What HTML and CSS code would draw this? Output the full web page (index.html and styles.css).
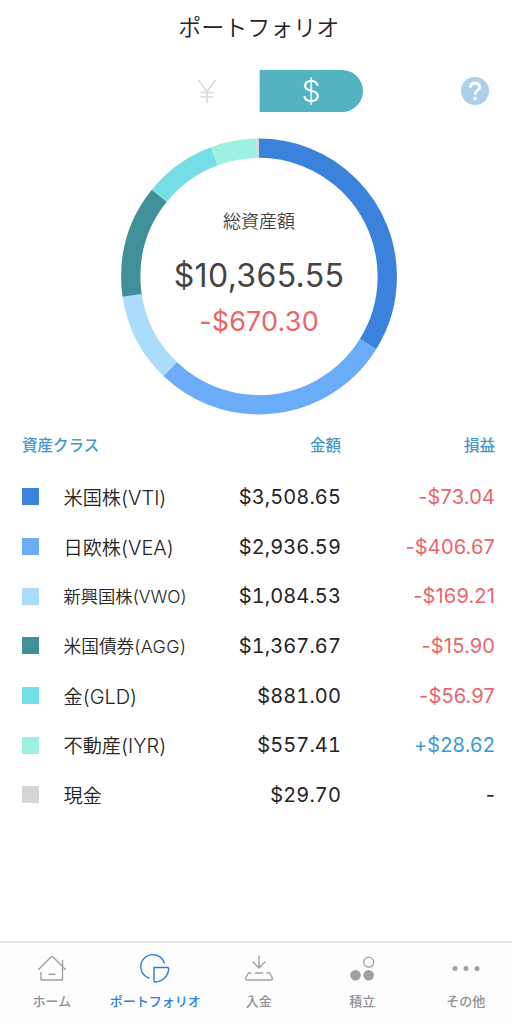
FILE: index.html
```html
<!DOCTYPE html>
<html lang="ja">
<head>
<meta charset="utf-8">
<title>ポートフォリオ</title>
<link rel="stylesheet" href="styles.css">
</head>
<body>
<div class="app">
  <header class="title">ポートフォリオ</header>
  <div class="controls">
    <div class="switch">
      <span class="option">
        <svg width="20" height="24" viewBox="0 0 20 24"><path d="M1.500 1L10 12.500 18.500 1M10 12.500V24M3.500 13.500h13M3.500 18h13"/></svg>
      </span>
      <span class="option selected">$</span>
    </div>
    <span class="help"><svg width="28" height="28" viewBox="0 0 28 28"><circle cx="14" cy="14" r="14"/><path d="M9.500 10.500C9.500 7.500 11.500 6 14 6s4.700 1.600 4.700 4.200c0 3.300-4.500 3.300-4.500 7.300"/><rect x="12.700" y="20" width="3" height="3"/></svg></span>
  </div>
  <section class="chart">
    <svg class="ring" width="278" height="278" viewBox="0 0 278 278">
      <g transform="rotate(-90 139 139)">
        <circle cx="138.500" cy="139" r="128.300" pathLength="10365.55" stroke="#3b82dc" stroke-dasharray="3508.65 6856.90"/>
        <circle cx="138.500" cy="139" r="128.300" pathLength="10365.55" stroke="#6aacf7" stroke-dasharray="2936.59 7428.96" stroke-dashoffset="-3508.65"/>
        <circle cx="138.500" cy="139" r="128.300" pathLength="10365.55" stroke="#acdcfb" stroke-dasharray="1084.53 9281.02" stroke-dashoffset="-6445.24"/>
        <circle cx="138.500" cy="139" r="128.300" pathLength="10365.55" stroke="#40909a" stroke-dasharray="1367.67 8997.88" stroke-dashoffset="-7529.77"/>
        <circle cx="138.500" cy="139" r="128.300" pathLength="10365.55" stroke="#75dde5" stroke-dasharray="881 9484.55" stroke-dashoffset="-8897.44"/>
        <circle cx="138.500" cy="139" r="128.300" pathLength="10365.55" stroke="#9ef0e0" stroke-dasharray="557.41 9808.14" stroke-dashoffset="-9778.44"/>
        <circle cx="138.500" cy="139" r="128.300" pathLength="10365.55" stroke="#d6d6d6" stroke-dasharray="29.70 10335.85" stroke-dashoffset="-10335.85"/>
      </g>
    </svg>
    <div class="summary">
      <div class="caption">総資産額</div>
      <div class="total">$10,365.55</div>
      <div class="change">-$670.30</div>
    </div>
  </section>
  <section class="assets">
    <div class="head"><span>資産クラス</span><span>金額</span><span>損益</span></div>
    <div class="row"><i class="swatch vti"></i><span class="name">米国株<b>(VTI)</b></span><span class="amount">$3,508.65</span><span class="gain">-$73.04</span></div>
    <div class="row"><i class="swatch vea"></i><span class="name">日欧株<b>(VEA)</b></span><span class="amount">$2,936.59</span><span class="gain">-$406.67</span></div>
    <div class="row"><i class="swatch vwo"></i><span class="name small">新興国株<b>(VWO)</b></span><span class="amount">$1,084.53</span><span class="gain">-$169.21</span></div>
    <div class="row"><i class="swatch agg"></i><span class="name small agg-name">米国債券<b>(AGG)</b></span><span class="amount">$1,367.67</span><span class="gain">-$15.90</span></div>
    <div class="row"><i class="swatch gld"></i><span class="name">金<b>(GLD)</b></span><span class="amount">$881.00</span><span class="gain">-$56.97</span></div>
    <div class="row"><i class="swatch iyr"></i><span class="name">不動産<b>(IYR)</b></span><span class="amount">$557.41</span><span class="gain plus">+$28.62</span></div>
    <div class="row"><i class="swatch cash"></i><span class="name">現金</span><span class="amount">$29.70</span><span class="gain none">-</span></div>
  </section>
  <nav class="tabs">
    <a class="tab"><svg viewBox="0 0 32 32"><path d="M2.500 16.500L14.500 4.500Q16 3 17.500 4.500L29.500 16.500M26.500 7.500V27H5v-7.500M13 21.300h6"/></svg>ホーム</a>
    <a class="tab active"><svg viewBox="0 0 32 32"><path d="M10 25A12 12 0 1 1 25.300 10"/><path d="M15 14.500H28.500a1.200 1.200 0 0 1 1.200 1.400A14 14 0 0 1 16.300 29a1.200 1.200 0 0 1-1.300-1.200Z"/></svg>ポートフォリオ</a>
    <a class="tab"><svg viewBox="0 0 32 32"><path d="M16 3v11M10 9l6 6 6-6M8 20H5.500L2.800 24.500Q2 27 4.500 27h23Q30 27 29.200 24.500L26.500 20H24M12.500 20h7"/></svg>入金</a>
    <a class="tab"><svg class="solid" viewBox="0 0 32 32"><circle cx="22.700" cy="9.200" r="5" fill="none" stroke="#a0a0a0" stroke-width="1.300"/><circle cx="9.500" cy="22.300" r="5.300"/><circle cx="22.700" cy="22.300" r="5.300"/></svg>積立</a>
    <a class="tab"><svg class="solid" viewBox="0 0 32 32"><circle cx="5" cy="15.500" r="2.500"/><circle cx="16" cy="15.500" r="2.500"/><circle cx="27" cy="15.500" r="2.500"/></svg>その他</a>
  </nav>
</div>
</body>
</html>
```
FILE: styles.css
```css
* { box-sizing: border-box; }
body {
  margin: 0;
  overflow: hidden;
  background: #fff;
  font-family: Inter, "Noto Sans CJK JP", sans-serif;
  color: #242424;
}
.app {
  width: 517.5px;
  height: 1024px;
  display: flex;
  flex-direction: column;
}
.title {
  height: 54px;
  line-height: 56px;
  text-align: center;
  font-size: 23px;
  font-weight: 350;
}
.controls {
  height: 76px;
  display: grid;
  grid-template-columns: 154.500px 208px 1fr;
  padding-top: 16px;
}
.switch {
  grid-column: 2;
  display: grid;
  grid-template-columns: 1fr 1fr;
  width: 208px;
  height: 42px;
  border-radius: 21px;
  box-shadow: inset 0 0 0 1px #fcfcfc;
  overflow: hidden;
}
.option { display: flex; align-items: center; justify-content: center; }
.option svg { fill: none; stroke: #dcdcdc; stroke-width: 1.7; }
.selected {
  background: #53b3c0;
  border-left: 1px solid #d5dede;
  color: #fff;
  font-size: 30px;
  font-weight: 300;
}
.help { padding: 7px 0 0 98px; }
.help circle { fill: #acd0e9; }
.help rect { fill: #fff; }
.help path { fill: none; stroke: #fff; stroke-width: 2.800; }
.chart { display: grid; height: 290px; padding: 7px 0 0 120px; }
.ring { grid-area: 1 / 1; }
.ring circle { fill: none; stroke-width: 19.300; }
.summary {
  grid-area: 1 / 1;
  width: 278px;
  display: flex;
  flex-direction: column;
  align-items: center;
  padding-top: 72px;
  color: #444;
}
.caption { font-size: 18px; line-height: 26px; font-weight: 350; }
.total { margin-top: 19px; font-size: 32px; line-height: 44px; letter-spacing: .35px; }
.change { margin-top: 6px; font-size: 27px; line-height: 36px; letter-spacing: .15px; color: #ec656a; }
.assets { padding: 7px 22.500px 0 22px; }
.head, .row { display: grid; align-items: center; }
.head {
  grid-template-columns: 218px 101px 154px;
  height: 34px;
  margin-bottom: 11px;
  color: #4298cd;
  font-size: 15.500px;
  font-weight: 500;
}
.head span + span { text-align: right; }
.row {
  grid-template-columns: 41.500px 150.500px 127px 154px;
  height: 49.700px;
}
.swatch { width: 17px; height: 17px; }
.vti { background: #3b82dc; }
.vea { background: #6aacf7; }
.vwo { background: #acdcfb; }
.agg { background: #40909a; }
.gld { background: #75dde5; }
.iyr { background: #9ef0e0; }
.cash { background: #d6d6d6; }
.name { font-size: 19.200px; font-weight: 350; white-space: nowrap; line-height: 28px; padding-top: 2px; }
.name b { font-size: 1.04em; font-weight: 350; }
.small { font-size: 17.300px; }
.small b { font-size: 1.010em; }
.agg-name { font-size: 17.700px; }
.agg-name b { letter-spacing: .3px; }
.amount, .gain { text-align: right; font-size: 20px; }
.amount { font-variant-numeric: tabular-nums; letter-spacing: .1px; }
.gain { letter-spacing: .15px; color: #ec656a; }
.plus { color: #4298d5; }
.none { color: #242424; }
.tabs {
  margin-top: auto;
  height: 83px;
  border-top: 2px solid #e6e6e6;
  background: #fdfdfd;
  display: grid;
  grid-template-columns: repeat(5, 1fr);
}
.tab {
  display: flex;
  flex-direction: column;
  align-items: center;
  padding-top: 10px;
  color: #919191;
  font-size: 13px;
  line-height: 20px;
  font-weight: 500;
  white-space: nowrap;
}
.tab svg { width: 32px; height: 32px; margin-bottom: 6px; fill: none; stroke: #a0a0a0; stroke-width: 1.4; stroke-linecap: round; stroke-linejoin: round; }
.tab .solid { fill: #a0a0a0; stroke: none; }
.active { color: #2c7ee0; }
.active svg { stroke: #2c7ee0; }
```
